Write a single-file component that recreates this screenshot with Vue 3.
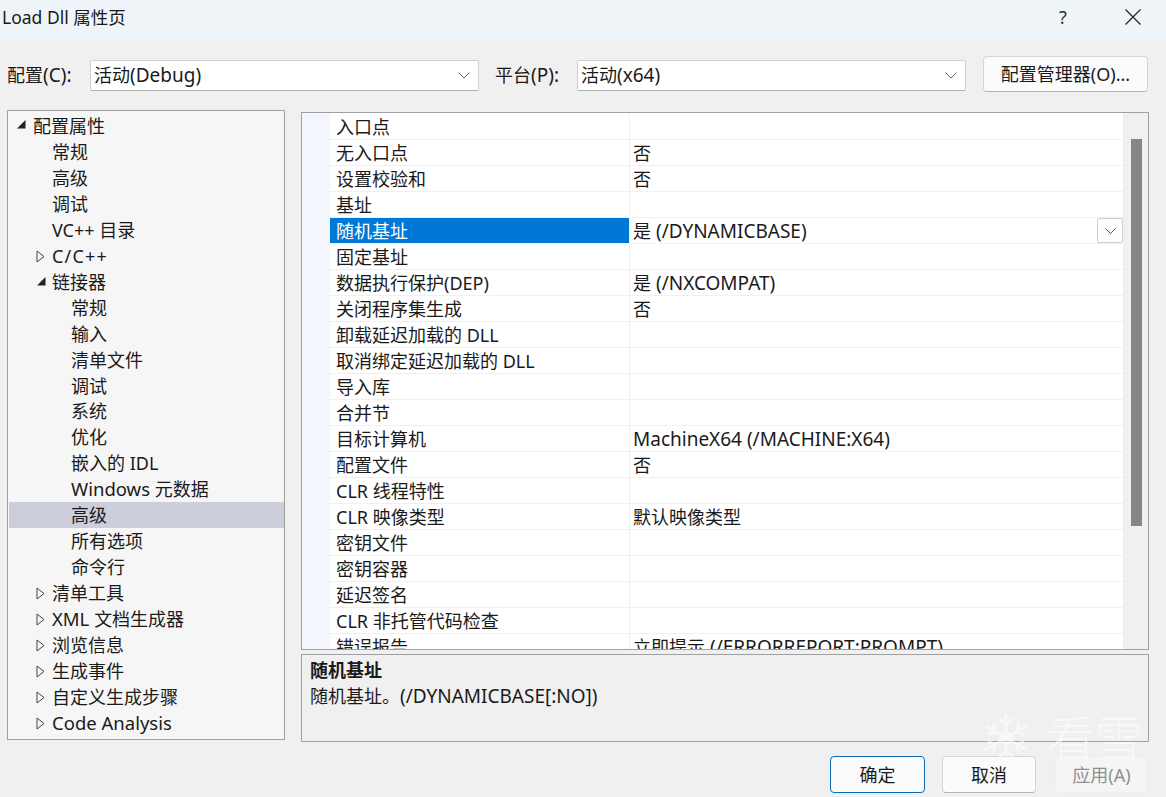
<script setup>
const tree = [
  { t: '配置属性', l: 0, a: 'open' },
  { t: '常规', l: 1 }, { t: '高级', l: 1 }, { t: '调试', l: 1 }, { t: 'VC++ 目录', l: 1 },
  { t: 'C/C++', l: 1, a: 'closed', wide: true },
  { t: '链接器', l: 1, a: 'open' },
  { t: '常规', l: 2 }, { t: '输入', l: 2 }, { t: '清单文件', l: 2 }, { t: '调试', l: 2 },
  { t: '系统', l: 2 }, { t: '优化', l: 2 }, { t: '嵌入的 IDL', l: 2 }, { t: 'Windows 元数据', l: 2, grow: true },
  { t: '高级', l: 2, sel: true }, { t: '所有选项', l: 2 }, { t: '命令行', l: 2 },
  { t: '清单工具', l: 1, a: 'closed' }, { t: 'XML 文档生成器', l: 1, a: 'closed', grow: true },
  { t: '浏览信息', l: 1, a: 'closed' }, { t: '生成事件', l: 1, a: 'closed' },
  { t: '自定义生成步骤', l: 1, a: 'closed' }, { t: 'Code Analysis', l: 1, a: 'closed', grow: true }
]
const rows = [
  ['入口点', ''], ['无入口点', '否'], ['设置校验和', '否'], ['基址', ''],
  ['随机基址', '是 (/DYNAMICBASE)', true], ['固定基址', ''],
  ['数据执行保护(DEP)', '是 (/NXCOMPAT)'], ['关闭程序集生成', '否'],
  ['卸载延迟加载的 DLL', ''], ['取消绑定延迟加载的 DLL', ''], ['导入库', ''], ['合并节', ''],
  ['目标计算机', 'MachineX64 (/MACHINE:X64)'], ['配置文件', '否'], ['CLR 线程特性', ''],
  ['CLR 映像类型', '默认映像类型'], ['密钥文件', ''], ['密钥容器', ''], ['延迟签名', ''],
  ['CLR 非托管代码检查', ''], ['错误报告', '立即提示 (/ERRORREPORT:PROMPT)']
]
// Latin runs are set a touch larger than the CJK around them
const runs = (s) =>
  s.split(/([\x20-\x7e]+)/).filter(Boolean).map((t) => ({ t, lat: /^[\x20-\x7e]/.test(t) }))
</script>

<template>
  <div class="win">
    <header class="title">
      <span class="title-text">Load Dll 属性页</span>
      <span class="help">?</span>
      <svg class="close" width="16" height="16" viewBox="0 0 16 16"><path d="M0.5 0.5 L15.5 15.5 M15.5 0.5 L0.5 15.5" stroke="#222" stroke-width="1.2" fill="none"/></svg>
    </header>

    <div class="config">
      <label class="lbl-a">配置<span class="lat">(C):</span></label>
      <div class="select sel-a">
        <span>活动<span class="lat">(Debug)</span></span>
        <svg class="chev" width="12" height="7" viewBox="0 0 12 7"><path d="M0.5 0.5 L6 6 L11.5 0.5" stroke="#666" fill="none"/></svg>
      </div>
      <label class="lbl-b">平台<span class="lat">(P):</span></label>
      <div class="select sel-b">
        <span>活动<span class="lat">(x64)</span></span>
        <svg class="chev" width="12" height="7" viewBox="0 0 12 7"><path d="M0.5 0.5 L6 6 L11.5 0.5" stroke="#666" fill="none"/></svg>
      </div>
      <button class="btn mgr">配置管理器(O)...</button>
    </div>

    <div class="main">
      <nav class="tree">
        <div v-for="(n, i) in tree" :key="i" class="node" :class="['lv' + n.l, { on: n.sel, wide: n.wide, grow: n.grow }]">
          <svg v-if="n.a === 'open'" class="arrow" width="10" height="10" viewBox="0 0 10 10"><path d="M9.5 1 V9.5 H1 Z" fill="#222"/></svg>
          <svg v-else-if="n.a === 'closed'" class="arrow" width="9" height="13" viewBox="0 0 9 13"><path d="M1 1 L8 6.5 L1 12 Z" fill="none" stroke="#444"/></svg>
          <span v-for="(p, j) in runs(n.t)" :key="j" :class="{ lat: p.lat }">{{ p.t }}</span>
        </div>
      </nav>

      <div class="right">
        <section class="grid-wrap">
          <div class="gutter"></div>
          <div class="grid">
            <div v-for="(r, i) in rows" :key="i" class="row">
              <div class="name" :class="{ selected: r[2] }">{{ r[0] }}</div>
              <div class="val"><span v-for="(p, j) in runs(r[1])" :key="j" :class="{ lat: p.lat }">{{ p.t }}</span></div>
              <div v-if="r[2]" class="drop">
                <svg width="11" height="6" viewBox="0 0 11 6"><path d="M0.5 0.5 L5.5 5.5 L10.5 0.5" stroke="#555" fill="none"/></svg>
              </div>
            </div>
          </div>
          <div class="scroll"><div class="thumb"></div></div>
        </section>
        <section class="desc">
          <strong>随机基址</strong>
          <p>随机基址。<span class="lat">(/DYNAMICBASE[:NO])</span></p>
        </section>
      </div>
    </div>

    <footer class="foot">
      <button class="btn ok">确定</button>
      <button class="btn">取消</button>
      <button class="btn off">应用(A)</button>
    </footer>

    <div class="mark">
      <svg width="50" height="50" viewBox="0 0 54 54" fill="none" stroke="#fff" stroke-width="3">
        <path d="M27 1 V53 M4.5 14 L49.5 40 M49.5 14 L4.5 40"/>
        <path d="M20 6 L27 13 L34 6 M20 48 L27 41 L34 48 M7 23 L16 20.5 L13 11 M47 23 L38 20.5 L41 11 M7 31 L16 33.5 L13 43 M47 31 L38 33.5 L41 43"/>
        <circle cx="27" cy="27" r="6"/>
      </svg>
      <span>看雪</span>
    </div>
  </div>
</template>

<style>
html, body { margin: 0; background: #f0f0f0; }
</style>

<style scoped>
.win {
  position: relative;
  width: 1166px; height: 797px; overflow: hidden;
  background: #f0f0f0; color: #1a1a1a;
  font: 18px/26px "Noto Sans", "Noto Sans CJK SC", sans-serif;
  display: flex; flex-direction: column;
}
.lat { font-size: 19px; line-height: 1; }
.title {
  height: 40px; flex: none; box-sizing: border-box; background: #eff4f9;
  display: flex; align-items: center; padding: 0 0 6px 2px;
}
.title-text { flex: 1; font-size: 17.5px; }
.help { width: 66px; font-size: 18px; color: #333; }
.close { margin-right: 25px; }
.config {
  height: 70px; flex: none; box-sizing: border-box; padding: 0 18px 0 7px;
  display: flex; align-items: center;
}
.select {
  box-sizing: border-box; height: 31px; width: 389px; background: #fff;
  border: 1px solid #d0d0d0; border-bottom-color: #b0b0b0; border-radius: 2px;
  display: flex; align-items: center; justify-content: space-between;
  padding: 0 8px 0 3px;
}
.lbl-a { width: 83px; }
.lbl-b { width: 82px; margin-left: 16px; }
.btn {
  font: inherit; color: inherit; box-sizing: border-box; height: 37px; width: 94px;
  background: #fbfbfb; border: 1px solid #d4d4d4; border-bottom-color: #b4b4b4;
  border-radius: 4px; padding: 0;
}
.mgr { width: 165px; height: 36px; margin-left: 17px; margin-top: -3px; }
.main {
  flex: 1; min-height: 0; display: flex; gap: 16px; padding: 0 17px 0 7px;
}
.tree {
  box-sizing: border-box; width: 278px; height: 630px; flex: none;
  background: #f6f6f6; border: 1px solid #a0a0a0; padding: 2px 0 0 1px;
}
.node { position: relative; height: 25.96px; white-space: nowrap; }
.node .lat { font-size: 18px; }
.node.grow .lat { font-size: 18.5px; }
.node.wide .lat { letter-spacing: 1.2px; }
.lv0 { padding-left: 24px; }
.lv1 { padding-left: 43px; }
.lv2 { padding-left: 62px; }
.node.on { background: #cccedb; }
.arrow { position: absolute; }
.lv0 .arrow { left: 7px; top: 6px; }
.lv1 .arrow { left: 27px; top: 7px; }
.right { flex: 1; min-width: 0; display: flex; flex-direction: column; gap: 4px; }
.grid-wrap {
  box-sizing: border-box; height: 538px; margin-top: 2px; flex: none;
  display: flex; background: #fff; border: 1px solid #a0a0a0; overflow: hidden;
}
.gutter { width: 28px; flex: none; background: #f3f6fc; }
.grid { flex: 1; min-width: 0; padding-top: 1px; }
.row {
  position: relative; display: flex; height: 26px; box-sizing: border-box;
  border-bottom: 1px solid #f0f0f0;
}
.name {
  width: 299px; flex: none; box-sizing: border-box; padding-left: 6px; height: 25px; white-space: nowrap;
}
.name.selected { background: #0078d7; color: #fff; }
.val { flex: 1; border-left: 1px solid #f0f0f0; padding-left: 3px; white-space: nowrap; }
.drop {
  position: absolute; right: 0; top: 0; width: 26px; height: 25px; box-sizing: border-box;
  background: #fdfdfd; border: 1px solid #cfcfcf; border-radius: 2px;
  display: flex; align-items: center; justify-content: center;
}
.scroll { width: 25px; flex: none; background: #f0f0f0; padding: 26px 6px 0 8px; box-sizing: border-box; }
.thumb { width: 11px; height: 387px; background: #868686; }
.desc {
  box-sizing: border-box; height: 88px; flex: none; border: 1px solid #a0a0a0;
  padding: 2px 8px; background: #f0f0f0;
}
.desc strong { display: block; font-weight: 700; }
.desc p { margin: 0; }
.foot {
  flex: none; height: 56px; box-sizing: border-box; padding: 15px 18px 4px 0;
  display: flex; justify-content: flex-end; gap: 17px;
}
.ok { border: 1.5px solid #0a6ab0; width: 95px; }
.off { color: #8f8f8f; background: #f5f5f5; border-color: #ececec; width: 93px; margin-left: 2px; }
.mark {
  position: absolute; left: 981px; top: 711px; display: flex; align-items: center; gap: 16px;
  opacity: 0.55; pointer-events: none;
}
.mark span { font-size: 48px; line-height: 54px; color: #fff; font-weight: 300; }
</style>
